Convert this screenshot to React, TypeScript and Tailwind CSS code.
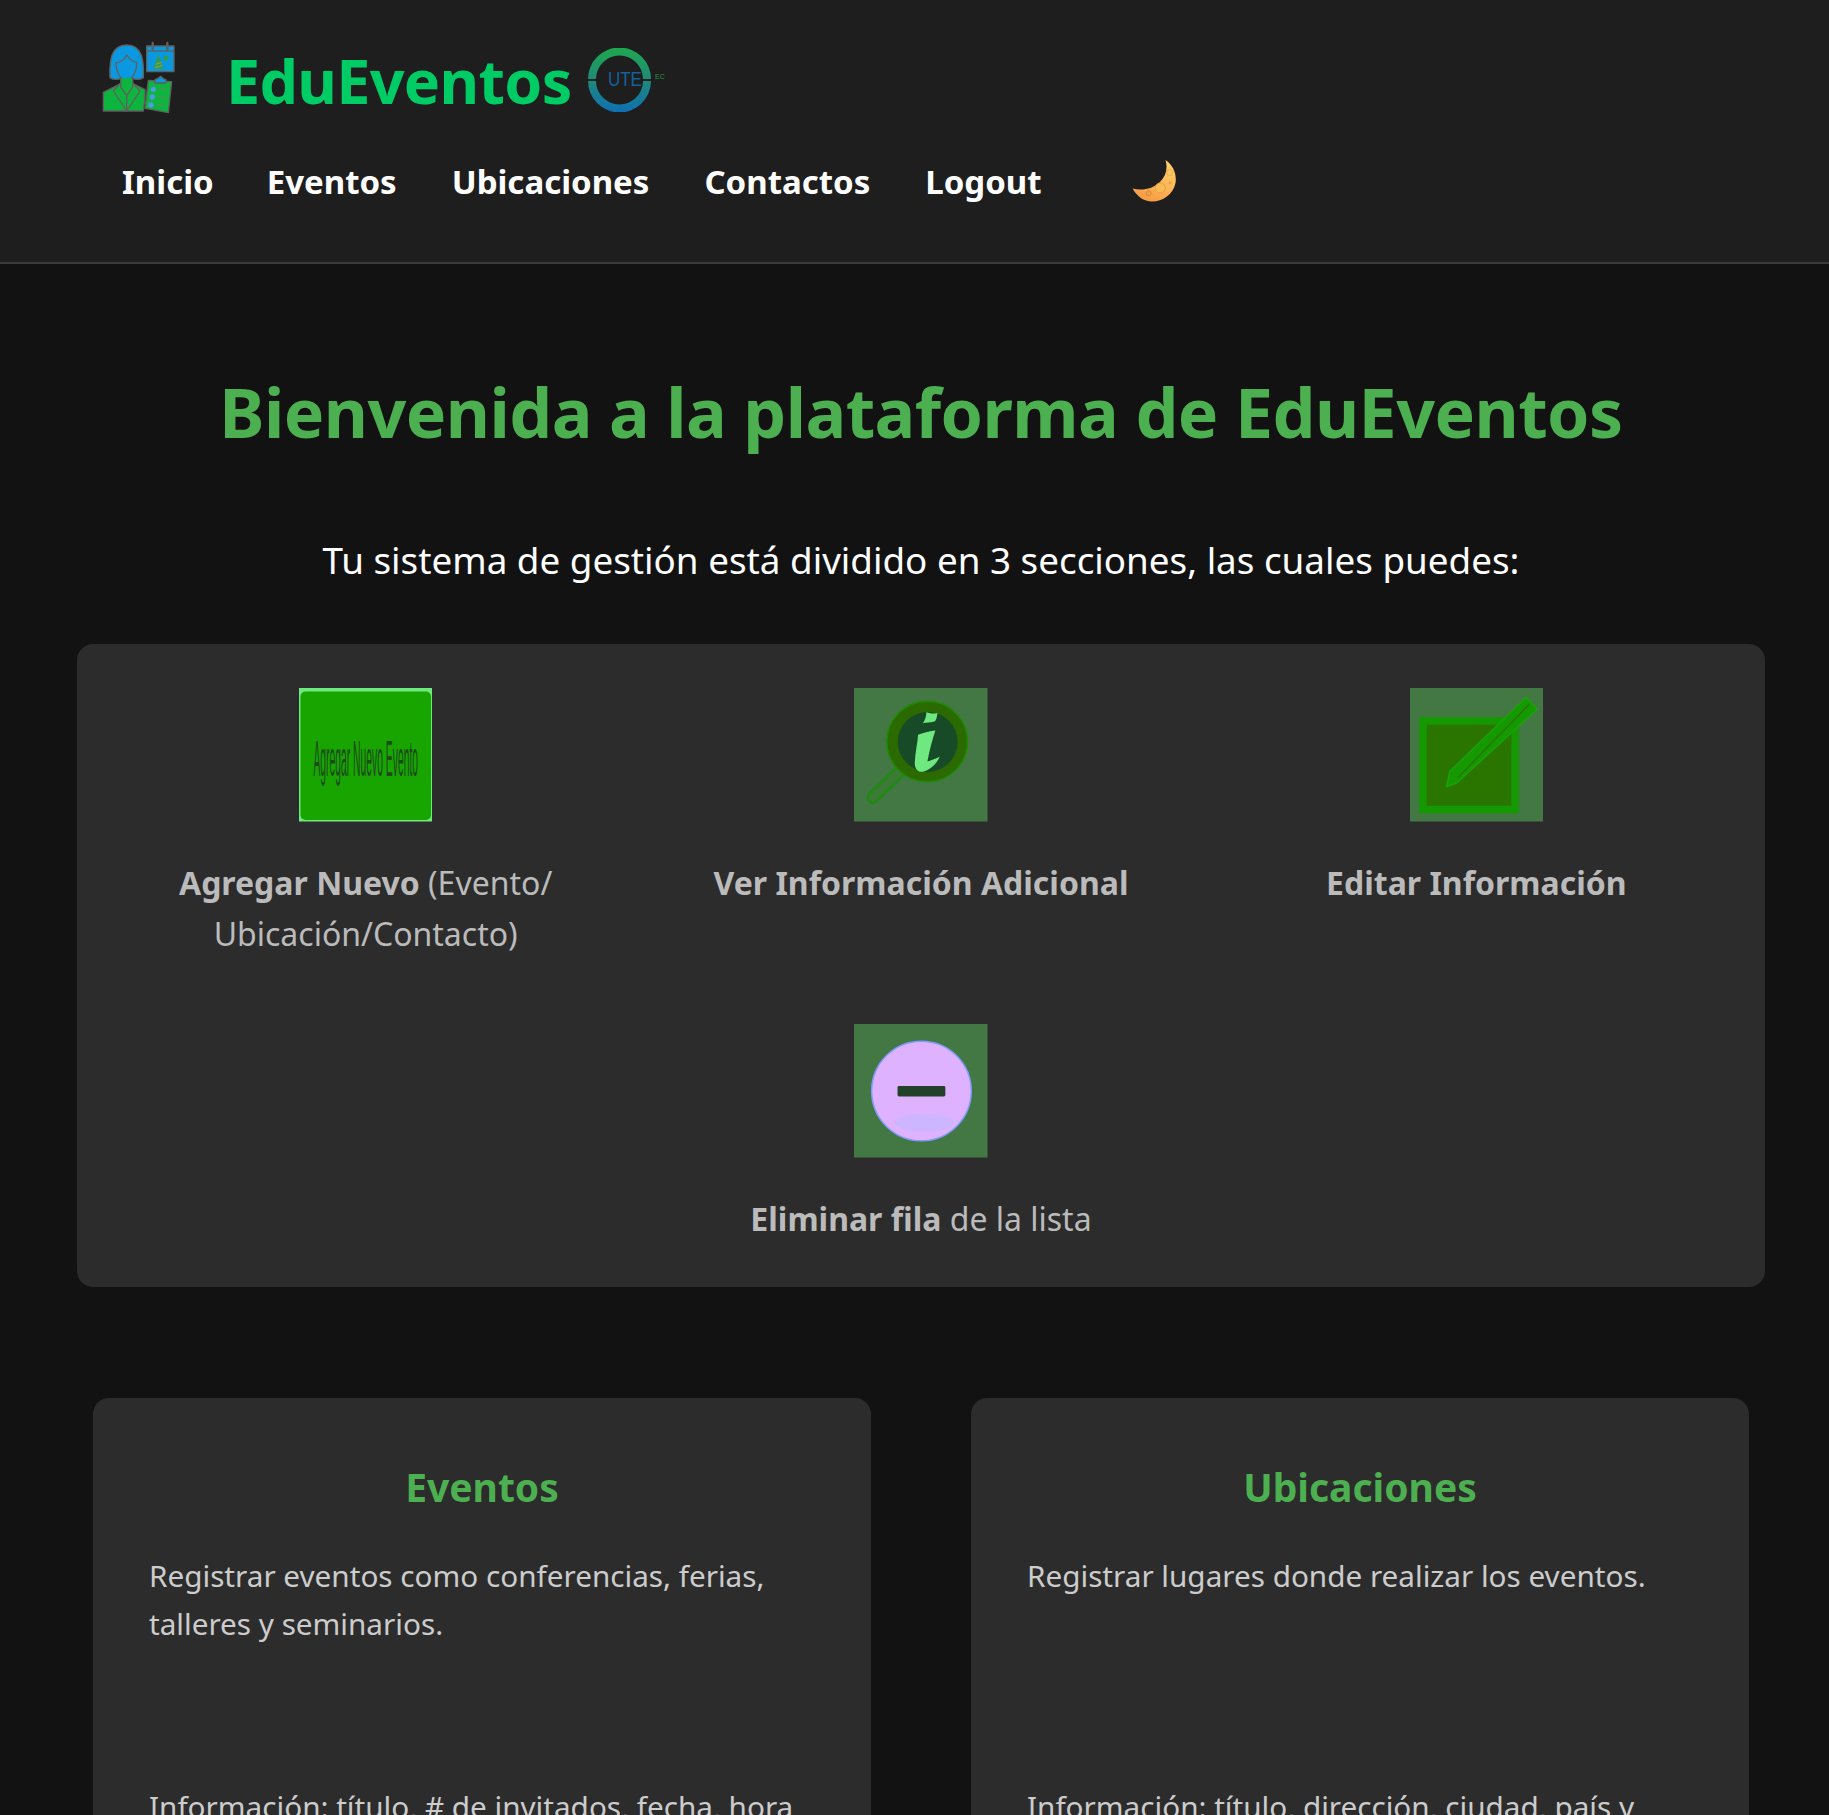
const font = "font-['Noto_Sans','Open_Sans',sans-serif]";

function PersonLogo() {
  return (
    <svg viewBox="0 0 330 270" className="-my-[10px] -ml-[10px] h-[90px] w-[110px] shrink-0 -translate-y-[4px]">
      <g stroke="#5f5f5f" strokeWidth="4" strokeLinejoin="round">
        <path d="M40 240V184l52-26h36l37 18v24l-5 40z" fill="#0db53e" />
        <path d="M60 140C58 90 62 42 110 42s52 48 50 98c-10 7-25 7-35 0H95c-10 7-25 7-35 0z" fill="#0a99e0" />
        <path d="M78 95c14 0 27-10 32-23 8 13 20 20 30 23 0 30-15 53-31 53S78 125 78 95z" fill="#0a99e0" />
        <path d="M92 142v26l18 26 18-26v-26" fill="#0db53e" />
        <path d="M92 156l-22 24 40 60 40-60-22-24" fill="none" />
        <path d="M110 194v46" fill="none" />
        <rect x="170" y="45" width="82" height="77" fill="#0a99e0" />
        <path d="M170 60h82" fill="none" />
        <path d="M188 36v20M232 36v20" strokeWidth="7" strokeLinecap="round" />
        <path d="M175 148l70 4-10 93-70-13z" fill="#0db53e" />
        <path d="M195 145c8 0 10-4 17-9 6 5 9 10 16 10v10h-33z" fill="#0a99e0" />
      </g>
      <path d="M190 114l15-44 16 44z" fill="#2f9d53" />
      <path d="M197 100l18-6M194 110l24-7" stroke="#d7a13a" strokeWidth="2" />
      <circle cx="228" cy="82" r="8" fill="#2f9d53" />
      <circle cx="190" cy="175" r="8" fill="#4b9be6" />
      <circle cx="187" cy="198" r="8" fill="#4b9be6" />
      <circle cx="183" cy="222" r="8" fill="#4b9be6" />
      <path d="M204 172l28 2M202 196l26 2M198 220l26 3" stroke="#5f8a5f" strokeWidth="3" />
    </svg>
  );
}

function UteLogo() {
  return (
    <svg viewBox="0 0 80 64" className="ml-[16px] h-[64px] w-[80px] shrink-0">
      <defs>
        <linearGradient id="ute-ring" x1="0" y1="0" x2="0" y2="1">
          <stop offset="0" stopColor="#1ea84f" />
          <stop offset="0.5" stopColor="#1f8a78" />
          <stop offset="1" stopColor="#0f6fb5" />
        </linearGradient>
      </defs>
      <path
        d="M0 31A31.500 31.500 0 0 1 63 31H55A23.500 23.500 0 0 0 8 31zM0 33H8A23.500 23.500 0 0 0 55 33H63A31.500 31.500 0 0 1 0 33z"
        fill="url(#ute-ring)"
      />
      <text transform="translate(20 38) scale(0.87 1)" fontFamily="Liberation Sans" fontSize="19.500" fill="#13619f">
        UTE
      </text>
      <text x="67" y="31" fontFamily="Liberation Sans" fontSize="7" fill="#2a8f4a">
        EC
      </text>
    </svg>
  );
}

function Moon() {
  return (
    <svg viewBox="0 0 44 42" className="h-[42px] w-[44px]">
      <defs>
        <linearGradient id="moon" x1="0.8" y1="0" x2="0.3" y2="1">
          <stop offset="0" stopColor="#ffd36a" />
          <stop offset="1" stopColor="#f89a45" />
        </linearGradient>
      </defs>
      <path
        d="M33.500 0C41 5 45 14 43.500 23 41 35 30 42 19 41.500 11 41 5 36 .5 28.500 10 31 21 29 28 22 34 16 36 8 33.500 0z"
        fill="url(#moon)"
      />
      <circle cx="28.300" cy="28" r="5" fill="#f9bb55" stroke="#eb9f42" />
      <circle cx="37.700" cy="12.700" r="3" fill="#f9c765" stroke="#efad4d" />
      <circle cx="16.700" cy="33.300" r="2.500" fill="#ee9f48" stroke="#d98c3b" />
      <circle cx="38" cy="22.700" r="1.500" fill="#eda24a" />
    </svg>
  );
}

function AddIcon() {
  return (
    <svg viewBox="0 0 134 134" className="h-[133.500px] w-[133.500px]">
      <rect width="134" height="134" fill="#6ee87f" />
      <rect x="1.500" y="3.500" width="131" height="129" rx="5" fill="#18a500" />
      <text transform="translate(67 88) scale(0.2075 1)" textAnchor="middle" fontFamily="Liberation Sans" fontSize="50" fill="#1d4a1d">
        Agregar Nuevo Evento
      </text>
    </svg>
  );
}

function InfoIcon() {
  return (
    <svg viewBox="0 0 134 134" className="h-[133.500px] w-[133.500px]">
      <rect width="134" height="134" fill="#437845" />
      <path d="M19 110l29-28" stroke="#1d8a12" strokeWidth="13" strokeLinecap="round" />
      <path d="M19 110l29-28" stroke="#3d7a35" strokeWidth="8" strokeLinecap="round" />
      <circle cx="73.500" cy="53.700" r="40.500" fill="#2a6a00" stroke="#1d8a00" strokeWidth="1.500" />
      <circle cx="74" cy="54" r="30" fill="#174a26" />
      <path d="M72.700 24c3 1.500 7 2 11 1-.5 4-1 8.500-4 9-3 .7-7 1-10.500 1.300 2-3 3.500-7 3.500-11.300z" fill="#6ee87f" />
      <path d="M64.300 47c6-2 12-4 17.400-4.300-3 9-6 20-8 31 4-1 9-3 12.300-4.700-3 7-9 13-16.700 15-5 1-8.500-3-8.300-9 .3-10 2.800-19 3.300-28z" fill="#6ee87f" />
    </svg>
  );
}

function EditIcon() {
  return (
    <svg viewBox="0 0 134 134" className="h-[133.500px] w-[133.500px]">
      <rect width="134" height="134" fill="#437845" />
      <rect x="13" y="33" width="92.500" height="89" fill="#2a7500" stroke="#149a00" strokeWidth="7.500" />
      <path d="M116.700 9.300l11 12-81 74-10 4 3.300-15.600z" fill="#149a00" stroke="#1aa308" strokeWidth="1.500" strokeLinejoin="round" />
      <path d="M120 16L48 90" stroke="#2a7500" strokeWidth="1.500" />
    </svg>
  );
}

function RemoveIcon() {
  return (
    <svg viewBox="0 0 134 134" className="h-[133.500px] w-[133.500px]">
      <rect width="134" height="134" fill="#437845" />
      <circle cx="67.700" cy="67.300" r="50" fill="#dfb2ff" stroke="#7f9bff" strokeWidth="1.500" />
      <ellipse cx="71" cy="99" rx="30" ry="9" fill="#cdb6ff" />
      <rect x="43.700" y="62.300" width="48" height="10.400" rx="1.500" fill="#22402a" />
    </svg>
  );
}

function Feature({ icon, children, className }: { icon: React.ReactNode; children: React.ReactNode; className?: string }) {
  return (
    <div className={`flex flex-col items-center text-center ${className ?? ""}`}>
      {icon}
      <p className="mt-[35.500px] max-w-[420px] text-[32px] leading-[51px] text-[#bbbbbb]">{children}</p>
    </div>
  );
}

function InfoCard({ title, intro, detail }: { title: string; intro: string; detail: string }) {
  return (
    <div className="rounded-[16px] bg-[#2c2c2c] px-[56px] pt-[60px] pb-[56px]">
      <h3 className="text-center text-[39px] leading-[58px] font-bold text-[#4caf50]">{title}</h3>
      <p className="mt-[36px] min-h-[231px] text-[29.700px] leading-[48px] text-[#cccccc]">{intro}</p>
      <p className="text-[29.700px] leading-[48px] text-[#cccccc]">{detail}</p>
    </div>
  );
}

export default function App() {
  return (
    <div className={`h-[1815px] overflow-hidden bg-[#121212] ${font}`}>
      <header className="h-[264px] border-b-2 border-[#3a3a3a] bg-[#1e1e1e] pl-[100px]">
        <div className="flex h-[160px] items-center">
          <PersonLogo />
          <span className="ml-[26px] text-[61px] leading-none font-bold tracking-[-0.7px] text-[#00cc66]">EduEventos</span>
          <UteLogo />
        </div>
        <nav className="-mt-[3px] flex items-center gap-[55px] pl-[22px]">
          <a className="-mr-[2px] text-[33px] font-bold text-white">Inicio</a>
          <a className="text-[33px] font-bold text-white">Eventos</a>
          <a className="text-[33px] font-bold text-white">Ubicaciones</a>
          <a className="text-[33px] font-bold text-white">Contactos</a>
          <a className="text-[33px] font-bold text-white">Logout</a>
          <span className="ml-[35px] -translate-y-[1px]">
            <Moon />
          </span>
        </nav>
      </header>

      <main className="w-[1842px]">
        <h1 className="mt-[103px] text-center text-[68px] leading-[90px] font-bold tracking-[-0.55px] text-[#4caf50]">
          Bienvenida a la plataforma de EduEventos
        </h1>
        <p className="mt-[77px] text-center text-[36.800px] leading-[52px] text-white">
          Tu sistema de gestión está dividido en 3 secciones, las cuales puedes:
        </p>

        <section className="mx-[77px] mt-[58px] grid grid-cols-3 gap-x-[66px] gap-y-[65px] rounded-[16px] bg-[#2c2c2c] px-[44px] pt-[44px] pb-[43px]">
          <Feature icon={<AddIcon />}>
            <strong>Agregar Nuevo</strong> (Evento/ Ubicación/Contacto)
          </Feature>
          <Feature icon={<InfoIcon />}>
            <strong>Ver Información Adicional</strong>
          </Feature>
          <Feature icon={<EditIcon />}>
            <strong>Editar Información</strong>
          </Feature>
          <Feature icon={<RemoveIcon />} className="col-start-2">
            <span>
              <strong>Eliminar fila</strong> de la lista
            </span>
          </Feature>
        </section>

        <section className="mx-[93px] mt-[111px] grid grid-cols-2 gap-x-[100px]">
          <InfoCard
            title="Eventos"
            intro="Registrar eventos como conferencias, ferias, talleres y seminarios."
            detail="Información: título, # de invitados, fecha, hora"
          />
          <InfoCard
            title="Ubicaciones"
            intro="Registrar lugares donde realizar los eventos."
            detail="Información: título, dirección, ciudad, país y"
          />
        </section>
      </main>
    </div>
  );
}
